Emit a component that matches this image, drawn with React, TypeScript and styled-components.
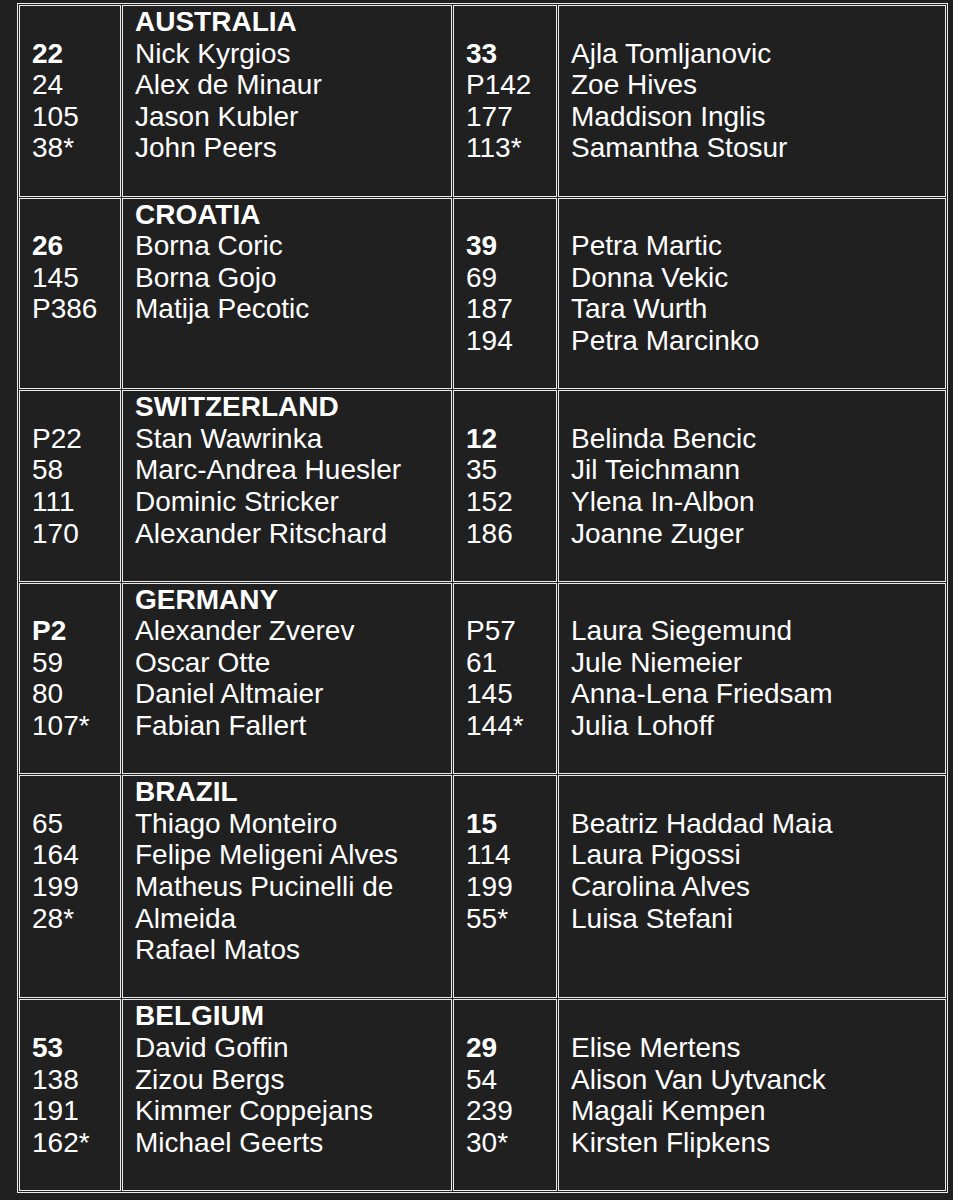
import React from "react";
import styled, { createGlobalStyle } from "styled-components";

const GlobalStyle = createGlobalStyle`
  html, body {
    margin: 0;
    padding: 0;
    background: #202020;
  }
  body {
    font-family: "Liberation Sans", Arial, Helvetica, sans-serif;
    color: #ffffff;
    -webkit-font-smoothing: antialiased;
  }
  * { box-sizing: border-box; }
`;

const LINE = 31.6;
const BORDER = "#ececec";

const Table = styled.div`
  display: grid;
  grid-template-columns: 102px 330px 104px 388px;
  gap: 1px;
  padding: 1px;
  border: 1px solid ${BORDER};
  width: fit-content;
  margin: 3px 0 0 17px;
`;

const Cell = styled.div<{ $wide?: boolean }>`
  border: 1px solid ${BORDER};
  padding: 0 12px ${LINE}px 12px;
  font-size: 28px;
  line-height: ${LINE}px;
  display: flex;
  flex-direction: column;
`;

const Line = styled.div<{ $bold?: boolean }>`
  font-weight: ${(p) => (p.$bold ? 700 : 400)};
  min-height: ${LINE}px;
  white-space: normal;
`;

const Country = styled.div`
  font-weight: 700;
  min-height: ${LINE}px;
`;

type Player = { rank: string; name: string; bold?: boolean };
type Team = {
  country: string;
  menRanks: { rank: string; bold?: boolean }[];
  menNames: string[];
  women: Player[];
};

const teams: Team[] = [
  {
    country: "AUSTRALIA",
    menRanks: [{ rank: "22", bold: true }, { rank: "24" }, { rank: "105" }, { rank: "38*" }],
    menNames: ["Nick Kyrgios", "Alex de Minaur", "Jason Kubler", "John Peers"],
    women: [
      { rank: "33", name: "Ajla Tomljanovic", bold: true },
      { rank: "P142", name: "Zoe Hives" },
      { rank: "177", name: "Maddison Inglis" },
      { rank: "113*", name: "Samantha Stosur" },
    ],
  },
  {
    country: "CROATIA",
    menRanks: [{ rank: "26", bold: true }, { rank: "145" }, { rank: "P386" }],
    menNames: ["Borna Coric", "Borna Gojo", "Matija Pecotic"],
    women: [
      { rank: "39", name: "Petra Martic", bold: true },
      { rank: "69", name: "Donna Vekic" },
      { rank: "187", name: "Tara Wurth" },
      { rank: "194", name: "Petra Marcinko" },
    ],
  },
  {
    country: "SWITZERLAND",
    menRanks: [{ rank: "P22" }, { rank: "58" }, { rank: "111" }, { rank: "170" }],
    menNames: ["Stan Wawrinka", "Marc-Andrea Huesler", "Dominic Stricker", "Alexander Ritschard"],
    women: [
      { rank: "12", name: "Belinda Bencic", bold: true },
      { rank: "35", name: "Jil Teichmann" },
      { rank: "152", name: "Ylena In-Albon" },
      { rank: "186", name: "Joanne Zuger" },
    ],
  },
  {
    country: "GERMANY",
    menRanks: [{ rank: "P2", bold: true }, { rank: "59" }, { rank: "80" }, { rank: "107*" }],
    menNames: ["Alexander Zverev", "Oscar Otte", "Daniel Altmaier", "Fabian Fallert"],
    women: [
      { rank: "P57", name: "Laura Siegemund" },
      { rank: "61", name: "Jule Niemeier" },
      { rank: "145", name: "Anna-Lena Friedsam" },
      { rank: "144*", name: "Julia Lohoff" },
    ],
  },
  {
    country: "BRAZIL",
    menRanks: [{ rank: "65" }, { rank: "164" }, { rank: "199" }, { rank: "28*" }],
    menNames: ["Thiago Monteiro", "Felipe Meligeni Alves", "Matheus Pucinelli de Almeida", "Rafael Matos"],
    women: [
      { rank: "15", name: "Beatriz Haddad Maia", bold: true },
      { rank: "114", name: "Laura Pigossi" },
      { rank: "199", name: "Carolina Alves" },
      { rank: "55*", name: "Luisa Stefani" },
    ],
  },
  {
    country: "BELGIUM",
    menRanks: [{ rank: "53", bold: true }, { rank: "138" }, { rank: "191" }, { rank: "162*" }],
    menNames: ["David Goffin", "Zizou Bergs", "Kimmer Coppejans", "Michael Geerts"],
    women: [
      { rank: "29", name: "Elise Mertens", bold: true },
      { rank: "54", name: "Alison Van Uytvanck" },
      { rank: "239", name: "Magali Kempen" },
      { rank: "30*", name: "Kirsten Flipkens" },
    ],
  },
];

export default function App() {
  return (
    <>
      <GlobalStyle />
      <Table>
        {teams.map((t) => (
          <React.Fragment key={t.country}>
            <Cell>
              <Line />
              {t.menRanks.map((r, i) => (
                <Line key={i} $bold={r.bold}>
                  {r.rank}
                </Line>
              ))}
            </Cell>
            <Cell>
              <Country>{t.country}</Country>
              {t.menNames.map((n) => (
                <Line key={n}>{n}</Line>
              ))}
            </Cell>
            <Cell>
              <Line />
              {t.women.map((w) => (
                <Line key={w.rank + w.name} $bold={w.bold}>
                  {w.rank}
                </Line>
              ))}
            </Cell>
            <Cell>
              <Line />
              {t.women.map((w) => (
                <Line key={w.name}>{w.name}</Line>
              ))}
            </Cell>
          </React.Fragment>
        ))}
      </Table>
    </>
  );
}
